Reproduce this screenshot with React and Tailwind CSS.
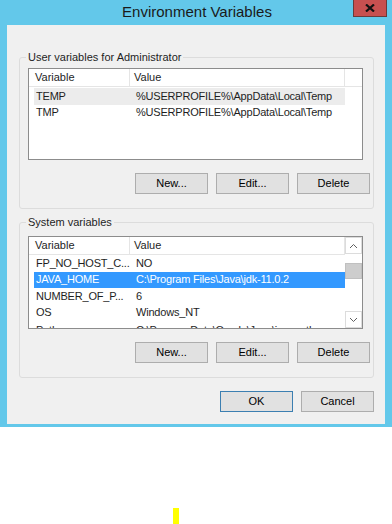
import React from "react";

const font = { fontFamily: '"Liberation Sans", Arial, sans-serif' };

const WinButton = ({ label, isDefault }) => (
    <div
        className={`w-[73px] h-[21px] flex items-center justify-center bg-[#e1e1e1] border text-[11px] text-black leading-none ${
            isDefault ? "border-[#3c7fb1]" : "border-[#adadad]"
        }`}
    >
        {label}
    </div>
);

const ListHeader = ({ withScroll }) => (
    <div className="flex h-[18px] border-b border-[#e5e5e5] text-[11px] text-[#1e1e1e] leading-none">
        <div className="w-[101px] border-r border-[#e5e5e5] pl-[6px] flex items-center">Variable</div>
        <div className="w-[215px] border-r border-[#e5e5e5] pl-[4px] flex items-center">Value</div>
        {!withScroll && <div className="flex-1" />}
    </div>
);

const Row = ({ name, value, state, className = "" }) => {
    const bg =
        state === "selected"
            ? "bg-[#3399ff] text-white"
            : state === "hover"
            ? "bg-[#ececec] text-[#1e1e1e]"
            : "text-[#1e1e1e]";
    return (
        <div className={`flex h-[16.5px] text-[11px] leading-none ${className}`}>
            <div className="w-[5px]" />
            <div className={`flex w-[311px] ${bg}`}>
                <div className="w-[101px] pl-[2px] flex items-center whitespace-nowrap overflow-hidden tracking-[-0.2px]">{name}</div>
                <div className="flex-1 pl-[1px] flex items-center whitespace-nowrap overflow-hidden tracking-[-0.2px]">{value}</div>
            </div>
        </div>
    );
};

const GroupBox = ({ title, className, children }) => (
    <div className={`relative ml-[12px] w-[355px] border border-[#dcdcdc] rounded-[3px] ${className}`}>
        <div className="absolute -top-[8px] left-[6px] px-[2px] bg-[#f0f0f0] text-[11px] leading-[14px] text-[#1e1e1e]">
            {title}
        </div>
        {children}
    </div>
);

const Buttons = ({ className }) => (
    <div className={`flex justify-end gap-[8px] pr-[3px] ${className}`}>
        <WinButton label="New..." />
        <WinButton label="Edit..." />
        <WinButton label="Delete" />
    </div>
);

const Arrow = ({ up }) => (
    <svg width="9" height="6" viewBox="0 0 9 6">
        <path
            d={up ? "M1 5 L4.5 1.5 L8 5" : "M1 1 L4.5 4.5 L8 1"}
            fill="none"
            stroke="#606060"
            strokeWidth="1"
        />
    </svg>
);

export default function App() {
    return (
        <div className="w-[392px] h-[524px] bg-white overflow-hidden" style={font}>
            <div className="bg-[#63c8ea] w-[392px] pb-[3px]">
                <div className="relative h-[25px] flex items-center justify-center">
                    <span className="text-[15px] text-[#1a1a1a] leading-none -mt-[3px] ml-[2px]">Environment Variables</span>
                    <div className="absolute right-[5px] top-0 w-[34px] h-[17px] bg-[#c75050] border border-[#6b3a3a] border-t-0 flex items-center justify-center">
                        <svg width="10" height="8" viewBox="0 0 10 8">
                            <path d="M1 0.5 L9 7.5 M9 0.5 L1 7.5" stroke="#111" strokeWidth="2.2" />
                        </svg>
                    </div>
                </div>

                <div className="ml-[7px] w-[378px] h-[399px] bg-[#f0f0f0] pt-[32px]">
                    <GroupBox title="User variables for Administrator" className="h-[152px]">
                        <div className="mt-[10px] ml-[8px] w-[335px] h-[92px] bg-white border border-[#8c8c8c]">
                            <ListHeader />
                            <div className="h-[1px]" />
                            <Row name="TEMP" value="%USERPROFILE%\AppData\Local\Temp" state="hover" />
                            <Row name="TMP" value="%USERPROFILE%\AppData\Local\Temp" />
                        </div>
                        <Buttons className="mt-[13px]" />
                    </GroupBox>

                    <GroupBox title="System variables" className="h-[156px] mt-[13px]">
                        <div className="mt-[13px] ml-[8px] w-[335px] h-[93px] bg-white border border-[#8c8c8c] flex overflow-hidden">
                            <div className="flex-1">
                                <ListHeader withScroll />
                                <Row name="FP_NO_HOST_C..." value="NO" />
                                <Row name="JAVA_HOME" value="C:\Program Files\Java\jdk-11.0.2" state="selected" />
                                <Row name="NUMBER_OF_P..." value="6" />
                                <Row name="OS" value="Windows_NT" />
                                <Row name="Path" value="C:\ProgramData\Oracle\Java\javapath" className="pt-[3px]" />
                            </div>
                            <div className="w-[17px] flex flex-col bg-white">
                                <div className="h-[17px] border border-[#dcdcdc] flex items-center justify-center">
                                    <Arrow up />
                                </div>
                                <div className="h-[9px]" />
                                <div className="h-[16px] bg-[#cdcdcd] border border-[#c0c0c0]" />
                                <div className="flex-1" />
                                <div className="h-[17px] border border-[#dcdcdc] flex items-center justify-center">
                                    <Arrow />
                                </div>
                            </div>
                        </div>
                        <Buttons className="mt-[13px]" />
                    </GroupBox>

                    <div className="flex justify-end gap-[8px] w-[367px] mt-[13px]">
                        <WinButton label="OK" isDefault />
                        <WinButton label="Cancel" />
                    </div>
                </div>
            </div>

            <div className="ml-[173px] mt-[81px] w-[6px] h-[16px] bg-[#ffff00]" />
        </div>
    );
}
